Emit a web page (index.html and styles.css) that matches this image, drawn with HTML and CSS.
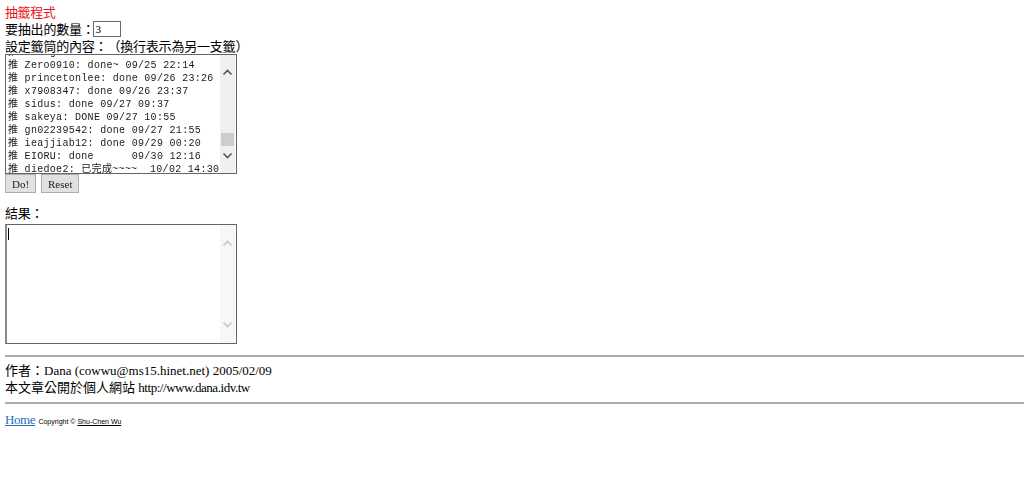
FILE: index.html
```html
<!DOCTYPE html>
<html lang="zh-Hant">
<head>
    <meta charset="UTF-8">
    <title>抽籤程式</title>
    <link rel="stylesheet" href="styles.css">
</head>
<body>
    <div class="title">抽籤程式</div>

    <div class="row">
        要抽出的數量：<input type="text" id="count" class="count" value="3">
    </div>
    <div class="row row-tight">設定籤筒的內容：（換行表示為另一支籤）</div>

    <!-- 籤筒：textarea + 模擬的捲軸 -->
    <div class="field">
        <textarea id="pool" class="box">推 Dana: 抽籤測試 09/20 10:02
推 littlecat: +1 09/20 10:15
推 kuroneko: done 09/20 11:40
推 abc12345: done 09/20 12:03
推 moonlight: done 09/20 13:27
推 shinyday: done 09/20 15:48
推 pinkpig: done 09/20 18:09
推 tom0723: done 09/20 20:31
推 rainbow88: done 09/20 22:50
推 jackyli: done 09/21 00:14
推 happyfish: done 09/21 08:36
推 sunnyboy: done 09/21 09:58
推 cherry: done 09/21 11:21
推 wind0101: done 09/21 13:45
推 ayumi: done 09/21 15:02
推 lovelyjun: done 09/21 17:33
推 nightowl: done 09/21 21:09
推 bluesky: done 09/22 00:48
推 peanut77: done 09/22 08:17
推 greentea: done 09/22 10:40
推 yoyo1983: done 09/22 12:55
推 meimei: done 09/22 14:22
推 chihiro: done 09/22 16:11
推 kevin0606: done 09/22 19:30
推 starfish: done 09/22 22:04
推 doraemon: done 09/23 01:26
推 lemontree: done 09/23 08:53
推 momoko: done 09/23 10:19
推 frankwu: done 09/23 12:47
推 sakura99: done 09/23 14:35
推 ilovecat: done 09/23 16:58
推 penguin: done 09/23 19:12
推 tinytim: done 09/23 21:40
推 summer: done 09/24 00:05
推 hiroshi: done 09/24 09:22
推 applepie: done 09/24 11:37
推 oolong: done 09/24 13:50
推 kitty520: done 09/24 16:08
推 maplestory: done 09/24 18:44
推 yellowduck: done 09/24 20:19
推 snoopy: done 09/24 23:01
推 ricecake: done 09/25 09:33
推 pudding: done 09/25 14:46
推 chenghan: done 09/25 18:27
推 Zero0910: done~ 09/25 22:14
推 princetonlee: done 09/26 23:26
推 x7908347: done 09/26 23:37
推 sidus: done 09/27 09:37
推 sakeya: DONE 09/27 10:55
推 gn02239542: done 09/27 21:55
推 ieajjiab12: done 09/29 00:20
推 EIORU: done      09/30 12:16
推 diedoe2: 已完成~~~~  10/02 14:30</textarea>
        <div class="scrollbar">
            <div class="sb-btn">
                <svg width="15" height="25"><path d="M3.5 19.5 L7.5 15.5 L11.5 19.5" fill="none" stroke="#555" stroke-width="1.6"/></svg>
            </div>
            <div class="sb-track"><div class="sb-thumb"></div></div>
            <div class="sb-btn">
                <svg width="15" height="25"><path d="M3.5 5.5 L7.5 9.5 L11.5 5.5" fill="none" stroke="#555" stroke-width="1.6"/></svg>
            </div>
        </div>
    </div>

    <div class="actions">
        <button type="button" class="btn">Do!</button>
        <button type="button" class="btn">Reset</button>
    </div>

    <div class="row result-label">結果：</div>
    <div class="field field-result">
        <div class="box result-box"><span class="caret"></span></div>
        <div class="scrollbar disabled">
            <div class="sb-btn">
                <svg width="15" height="25"><path d="M3.5 20.5 L7.5 16.5 L11.5 20.5" fill="none" stroke="#c6c6c6" stroke-width="1.6"/></svg>
            </div>
            <div class="sb-track"></div>
            <div class="sb-btn">
                <svg width="15" height="25"><path d="M3.5 4.5 L7.5 8.5 L11.5 4.5" fill="none" stroke="#c6c6c6" stroke-width="1.6"/></svg>
            </div>
        </div>
    </div>

    <hr class="rule">
    <div class="author">
        <div>作者：Dana (cowwu@ms15.hinet.net) 2005/02/09</div>
        <div>本文章公開於個人網站 <span class="url">http://www.dana.idv.tw</span></div>
    </div>
    <hr class="rule rule-end">

    <div class="footer">
        <a href="#" class="home">Home</a>
        <span class="copy">Copyright © <a href="#">Shu-Chen Wu</a></span>
    </div>

    <script src="script.js"></script>
</body>
</html>
```

FILE: styles.css
```css
body {
    margin: 4px 0 0 5px;
    font-family: "Liberation Serif", "Noto Sans CJK TC", serif;
    font-size: 13px;
    line-height: 17px;
    color: #000;
    background: #fff;
}

.title {
    color: #e8161b;
    letter-spacing: -0.4px;
}

.row {
    height: 17px;
    letter-spacing: -0.2px;
    text-spacing-trim: space-all;
}

.row-tight {
    height: 16px;
}

.count {
    width: 22px;
    height: 14px;
    padding: 0 2px;
    margin: 0 0 0 -2px;
    border: 1px solid #6b6b6b;
    font-family: "Liberation Serif", serif;
    font-size: 11px;
    font-weight: normal;
    letter-spacing: 0;
    vertical-align: top;
}

/* 文字框外框，捲軸畫在右側 */
.field {
    display: flex;
    box-sizing: border-box;
    width: 232px;
    height: 120px;
    border: 1px solid #646464;
    background: #fff;
}

.field-result {
    border-left: 2px solid #8a8a8a;
}

.box {
    flex: 1;
    min-width: 0;
    margin: 0;
    padding: 1px 2px;
    border: none;
    outline: none;
    resize: none;
    overflow: hidden;
    font-family: "Liberation Mono", "Noto Sans CJK TC", monospace;
    font-size: 10px;
    letter-spacing: 0.3px;
    line-height: 13px;
    white-space: pre;
    color: #1a1a1a;
    background: #fff;
    will-change: transform;
}

.result-box {
    padding: 3px 1px;
}

.caret {
    display: block;
    width: 1px;
    height: 12px;
    background: #000;
}

.scrollbar {
    width: 15px;
    margin-right: 1px;
    display: flex;
    flex-direction: column;
    background: #f0f0f0;
}

.scrollbar.disabled {
    background: #f7f7f7;
}

.sb-btn {
    height: 25px;
}

.sb-btn svg {
    display: block;
}

.sb-track {
    flex: 1;
    display: flex;
    flex-direction: column;
    justify-content: flex-end;
}

.sb-thumb {
    height: 13px;
    margin: 0 1px 2px;
    background: #cdcdcd;
}

.actions {
    display: flex;
    gap: 5px;
    margin-bottom: -1px;
}

.btn {
    height: 19px;
    padding: 0 6px;
    margin: 0;
    background: #e1e1e1;
    border: 1px solid #adadad;
    font-family: "Liberation Serif", serif;
    font-size: 11px;
    color: #1a1a1a;
    will-change: transform;
}

.result-label {
    margin: 13px 0 2px;
}

.rule {
    height: 0;
    margin: 11px 0 5px;
    border: 0;
    border-top: 2px solid #acacac;
}

.rule-end {
    margin: 6px 0 7px;
}

.author .url {
    letter-spacing: -0.45px;
}

.footer {
    font-size: 13px;
}

.home {
    color: #2a6ebb;
    letter-spacing: -0.4px;
}

.copy {
    font-family: "Liberation Sans", sans-serif;
    font-size: 7px;
}

.copy a {
    color: #000;
}
```

FILE: script.js
```js
// 讓籤筒捲到最後幾支籤
const pool = document.getElementById('pool');
pool.scrollTop = pool.scrollHeight - pool.clientHeight - 4;
```
